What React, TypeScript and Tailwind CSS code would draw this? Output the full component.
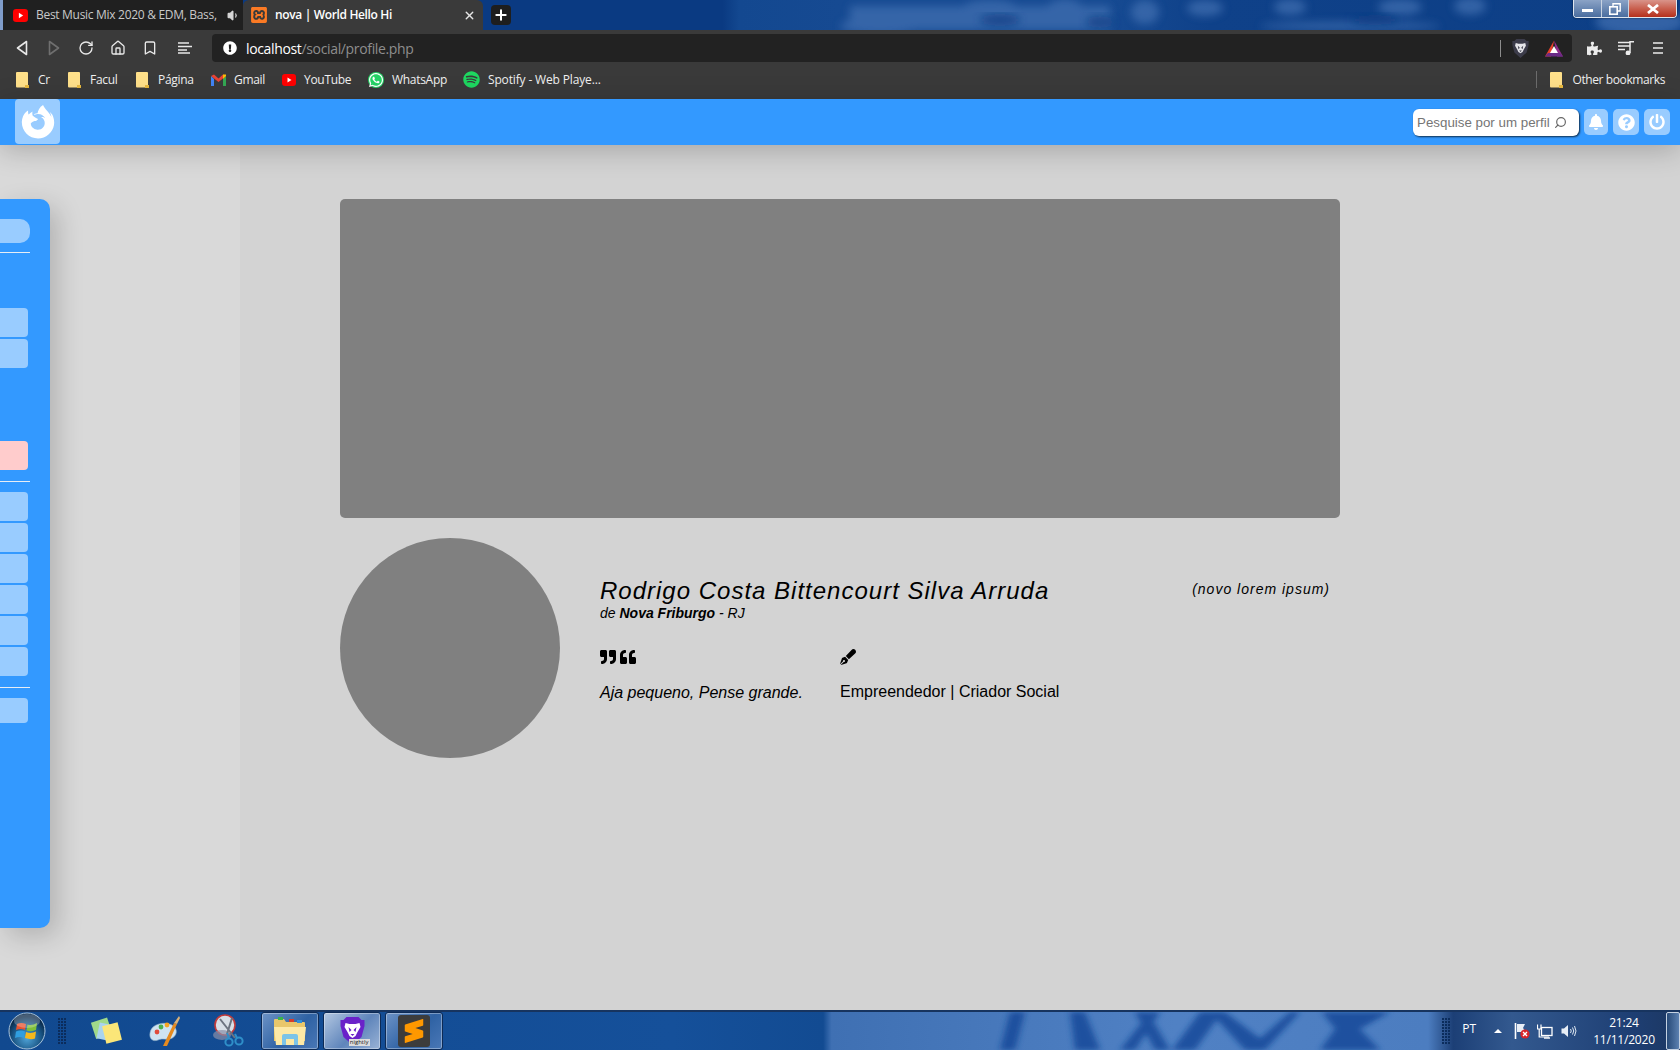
import React from "react";
import { FaBell, FaQuestionCircle, FaPowerOff, FaQuoteRight, FaQuoteLeft, FaPenFancy, FaWhatsapp, FaSpotify, FaPuzzlePiece, FaFirefoxBrowser, FaExclamationCircle } from "react-icons/fa";
import { SiSublimetext, SiXampp } from "react-icons/si";
import { Home, RotateCw, Bookmark, X, Plus, Volume1, Search } from "lucide-react";

const ui = "font-['Open_Sans',sans-serif]";
const web = "font-['Liberation_Sans',Arial,sans-serif]";

function Folder() {
  return (
    <svg width="13" height="16" viewBox="0 0 13 16" className="shrink-0">
      <path d="M0 1 a1 1 0 0 1 1-1 H11 a1 1 0 0 1 1 1 V13 L10 15.5 H1 a1 1 0 0 1-1-1 Z" fill="#ffe08a" />
      <path d="M9 13 H13 V16 H9 Z" fill="#e8b93f" />
    </svg>
  );
}

function Gmail() {
  return (
    <svg width="15" height="12" viewBox="0 0 15 12" className="shrink-0">
      <path d="M0 2 V12 H3 V5 Z" fill="#4285f4" />
      <path d="M12 5 V12 H15 V2 Z" fill="#34a853" />
      <path d="M0 2 L3 0.5 L7.5 4.5 L12 0.5 L15 2 L7.5 8 Z" fill="#ea4335" />
      <path d="M12 0.5 L15 0.5 V2 L12 5 Z" fill="#fbbc04" />
    </svg>
  );
}

function YT({ size = 14 }: { size?: number }) {
  return (
    <svg width={size} height={size} viewBox="0 0 14 14" className="shrink-0">
      <rect x="0" y="1" width="14" height="12" rx="3" fill="#f00" />
      <path d="M5.5 4.5 L9.5 7 L5.5 9.5 Z" fill="#fff" />
    </svg>
  );
}

function BraveShield({ w, h, fill, face }: { w: number; h: number; fill: string; face: string }) {
  return (
    <svg width={w} height={h} viewBox="0 0 24 28" className="shrink-0">
      <path d="M6 0 H18 L21 3 L24 3 L24 9 L21 20 L12 28 L3 20 L0 9 L0 3 L3 3 Z" fill={fill} />
      <path d="M5 6 L9 7 H15 L19 6 L20 10 L17 15 L15 19 L12 21 L9 19 L7 15 L4 10 Z" fill={face} />
      <path d="M8 10 L11 13 L9 15 Z M16 10 L13 13 L15 15 Z" fill={fill} />
      <path d="M10 17 H14 L12 19 Z" fill={fill} />
    </svg>
  );
}

function Mark({ icon, label, className = "", track = "tracking-[-0.3px]" }: { icon: React.ReactNode; label: string; className?: string; track?: string }) {
  return (
    <div className={`flex items-center shrink-0 ${className}`}>
      {icon}
      <span className={`text-[12px] ${track} text-[#f0f0f0] whitespace-nowrap`}>{label}</span>
    </div>
  );
}

function TitleWallpaper() {
  return (
    <svg className="absolute inset-0 w-full h-full" viewBox="0 0 1680 30" preserveAspectRatio="none">
      <defs>
        <filter id="tb"><feGaussianBlur stdDeviation="4" /></filter>
        <linearGradient id="tg" x1="0" x2="1">
          <stop offset="0" stopColor="#0a3a82" />
          <stop offset="0.43" stopColor="#0a3a82" />
          <stop offset="0.44" stopColor="#134890" />
          <stop offset="0.5" stopColor="#164a92" />
          <stop offset="0.66" stopColor="#164a92" />
          <stop offset="0.72" stopColor="#0f4189" />
          <stop offset="1" stopColor="#0d3f86" />
        </linearGradient>
      </defs>
      <rect width="1680" height="30" fill="url(#tg)" />
      <rect width="3" height="30" fill="#7f9cc9" />
      <g filter="url(#tb)" fill="#3f6eb0" opacity="0.75">
        <rect x="850" y="6" width="260" height="24" />
        <ellipse cx="880" cy="26" rx="40" ry="8" />
        <ellipse cx="990" cy="8" rx="28" ry="8" />
        <ellipse cx="1065" cy="8" rx="18" ry="9" />
        <ellipse cx="1145" cy="12" rx="14" ry="12" />
        <ellipse cx="1205" cy="8" rx="18" ry="8" />
        <ellipse cx="1290" cy="7" rx="16" ry="8" />
        <ellipse cx="1400" cy="7" rx="22" ry="8" />
        <ellipse cx="1470" cy="6" rx="16" ry="9" />
        <ellipse cx="1350" cy="26" rx="90" ry="4" />
        <ellipse cx="1640" cy="22" rx="45" ry="14" />
      </g>
      <g filter="url(#tb)" fill="#0a3a82" opacity="0.7">
        <ellipse cx="1000" cy="20" rx="20" ry="6" />
        <ellipse cx="1100" cy="22" rx="14" ry="6" />
        <ellipse cx="1375" cy="20" rx="24" ry="5" />
      </g>
    </svg>
  );
}

function TaskWallpaper() {
  return (
    <svg className="absolute inset-0 w-full h-full" viewBox="0 0 1680 40" preserveAspectRatio="none">
      <defs>
        <filter id="bb"><feGaussianBlur stdDeviation="3" /></filter>
        <linearGradient id="bg" x1="0" x2="1">
          <stop offset="0" stopColor="#11498f" />
          <stop offset="0.4" stopColor="#15509a" />
          <stop offset="0.49" stopColor="#124b92" />
          <stop offset="0.495" stopColor="#3f70b3" />
          <stop offset="0.7" stopColor="#5081c4" />
          <stop offset="0.85" stopColor="#4c7dc0" />
          <stop offset="0.865" stopColor="#1c3f76" />
          <stop offset="0.9" stopColor="#33598f" />
          <stop offset="0.97" stopColor="#1e3f74" />
          <stop offset="1" stopColor="#1c3762" />
        </linearGradient>
      </defs>
      <rect width="1680" height="40" fill="url(#bg)" />
      <g filter="url(#bb)" fill="#12489a" opacity="0.85">
        <path d="M1010 0 L1025 0 L1015 40 L1000 40 Z" />
        <path d="M1070 0 L1085 0 L1100 40 L1075 40 Z" />
        <path d="M1150 0 L1160 0 L1135 40 L1120 40 Z M1135 0 L1148 0 L1170 40 L1155 40 Z" />
        <path d="M1200 0 L1222 0 L1195 40 L1172 40 Z" />
        <path d="M1210 0 L1225 0 L1260 28 L1290 0 L1300 0 L1265 40 L1245 40 Z" />
        <path d="M1322 0 L1390 0 L1360 18 L1380 40 L1320 40 L1335 18 Z" />
      </g>
    </svg>
  );
}

function WinOrb() {
  return (
    <svg width="38" height="38" viewBox="0 0 38 38" className="shrink-0">
      <defs>
        <radialGradient id="orb" cx="50%" cy="70%" r="60%">
          <stop offset="0" stopColor="#4fa4d8" />
          <stop offset="0.7" stopColor="#17507f" />
          <stop offset="1" stopColor="#0b2a4a" />
        </radialGradient>
      </defs>
      <circle cx="19" cy="19" r="18" fill="url(#orb)" stroke="#a9c4dc" strokeWidth="1" />
      <path d="M9 12 Q13 10 18 12 L17 18 Q13 16 8 18 Z" fill="#e8532f" />
      <path d="M19.5 12.5 Q24 14 29 11 L28 18 Q24 20 18.5 18.5 Z" fill="#7fbf3a" />
      <path d="M8 19.5 Q13 17.5 17 19.5 L16 26 Q12 24 7 26 Z" fill="#2f9ee0" />
      <path d="M18 20 Q23 22 28 19.5 L27 26.5 Q23 28 17 26 Z" fill="#f4b81d" />
      <ellipse cx="19" cy="9" rx="13" ry="7" fill="#fff" opacity="0.25" />
    </svg>
  );
}

function Grip() {
  return (
    <div className="grid grid-cols-3 gap-[1px] shrink-0">
      {Array.from({ length: 27 }).map((_, i) => (
        <span key={i} className="w-[2px] h-[2px] bg-[#0b2c5c]" />
      ))}
    </div>
  );
}

function NotesIcon() {
  return (
    <svg width="32" height="28" viewBox="0 0 32 28">
      <rect x="3" y="3" width="17" height="17" fill="#9fd98a" transform="rotate(-18 11 11)" />
      <rect x="8" y="7" width="16" height="16" fill="#a9d4ee" transform="rotate(12 16 15)" />
      <rect x="14" y="7" width="16" height="18" fill="#fbe678" transform="rotate(-14 22 16)" />
    </svg>
  );
}

function PaintIcon() {
  return (
    <svg width="34" height="32" viewBox="0 0 34 32">
      <path d="M2 18 C3 9 16 6 24 10 C31 14 29 22 22 24 C16 25 15 23 10 25 C5 27 1 24 2 18 Z" fill="#cfe3f1" stroke="#8fb0c9" strokeWidth="0.6" />
      <circle cx="9" cy="17" r="2.4" fill="#e04c3c" />
      <circle cx="13" cy="12" r="2.4" fill="#4caf50" />
      <circle cx="19" cy="10" r="2.4" fill="#f5a623" />
      <path d="M15 31 L26 8 L29 9 L19 31 Z" fill="#e58a1f" />
      <path d="M26 8 L31 1 L32 3 L29 9 Z" fill="#d9b27a" />
    </svg>
  );
}

function SnipIcon() {
  return (
    <svg width="32" height="34" viewBox="0 0 32 34">
      <circle cx="13" cy="11" r="10" fill="#d8dfe6" stroke="#c23b3b" strokeWidth="1.6" />
      <ellipse cx="10" cy="21" rx="9" ry="5" fill="#8a8fa8" opacity="0.7" />
      <path d="M8 5 L23 24 M20 4 L15 20" stroke="#6d7480" strokeWidth="2" fill="none" />
      <circle cx="17" cy="28" r="3.6" fill="none" stroke="#2f8fc9" strokeWidth="2" />
      <circle cx="27" cy="27" r="3.6" fill="none" stroke="#2f8fc9" strokeWidth="2" />
      <path d="M17 24 L15 19 M25 24 L23 20" stroke="#2f8fc9" strokeWidth="2" />
    </svg>
  );
}

function ExplorerIcon() {
  return (
    <svg width="34" height="32" viewBox="0 0 34 32">
      <path d="M1 5 a1 1 0 0 1 1-1 H11 L13 7 H31 a1 1 0 0 1 1 1 V26 H1 Z" fill="#e9c76b" />
      <rect x="5" y="2" width="5" height="3" fill="#3bb54a" />
      <rect x="16" y="4" width="5" height="3" fill="#d73c2c" />
      <rect x="24" y="5" width="5" height="3" fill="#2f8fd9" />
      <path d="M1 12 H33 L31 30 H3 Z" fill="#fde9a6" />
      <path d="M9 30 V21 Q9 19 11 19 H23 Q25 19 25 21 V30 H21 V24 H13 V30 Z" fill="#7cc4e8" />
    </svg>
  );
}

function TaskButton({ children, active }: { children: React.ReactNode; active?: boolean }) {
  return (
    <div className={`w-[58px] h-[38px] rounded-[3px] border border-[#0d2a55] shadow-[inset_0_0_0_1px_rgba(255,255,255,0.35)] flex items-center justify-center ${active ? "bg-[linear-gradient(135deg,#b4c8e2,#5f85bb_55%,#9ab3d6)]" : "bg-[linear-gradient(135deg,#6d93c6,#2f62a4_55%,#4a78b6)]"}`}>
      {children}
    </div>
  );
}

function SideBtn({ pink, h = "h-[29px]" }: { pink?: boolean; h?: string }) {
  return <div className={`w-[28px] ${h} rounded-r-[4px] ${pink ? "bg-[#ffcccc]" : "bg-[#99ccff]"}`} />;
}

function SideLine() {
  return <div className="w-[30px] h-[1px] bg-[#e8eef5]" />;
}

export default function App() {
  return (
    <div className={`h-screen w-full flex flex-col overflow-hidden bg-[#d3d3d3] ${web}`}>
      {/* Title bar + tabs */}
      <div className={`relative h-[30px] shrink-0 flex items-end pl-[3px] ${ui}`}>
        <TitleWallpaper />
        <div className="relative h-[30px] w-[240px] bg-[#202020] flex items-center pl-[10px]">
          <YT size={15} />
          <span className="ml-[8px] w-[181px] overflow-hidden whitespace-nowrap text-[12px] tracking-[-0.3px] text-[#c9c9c9]">Best Music Mix 2020 &amp; EDM, Bass,</span>
          <Volume1 size={13} className="ml-[10px] text-[#d8d8d8]" fill="#d8d8d8" />
        </div>
        <div className="relative h-[30px] w-[240px] bg-[#3a3a3a] rounded-t-[6px] flex items-center pl-[8px]">
          <SiXampp size={16} className="text-[#fb7a24]" />
          <span className="ml-[8px] flex-1 whitespace-nowrap text-[12px] tracking-[-0.35px] font-semibold text-white">nova | World Hello Hi</span>
          <X size={13} strokeWidth={2.5} className="mr-[7px] text-[#e6e6e6]" />
        </div>
        <div className="relative ml-[8px] mb-[5px] w-[20px] h-[20px] rounded-[4px] bg-[#1e1e1e] flex items-center justify-center">
          <Plus size={16} strokeWidth={3} className="text-white" />
        </div>
        {/* window controls */}
        <div className="relative ml-auto mr-[3px] self-start h-[18px] w-[104px] flex rounded-b-[4px] border border-t-0 border-[#dfe6ef] overflow-hidden shadow-[0_0_2px_rgba(0,0,0,0.7)]">
          <div className="w-[28px] border-r border-[#c8d3e2] bg-[linear-gradient(#8ba3c6,#4a6d9f)] flex items-center justify-center">
            <span className="w-[11px] h-[3px] mt-[3px] bg-white" />
          </div>
          <div className="w-[27px] border-r border-[#c8d3e2] bg-[linear-gradient(#8ba3c6,#4a6d9f)] flex items-center justify-center">
            <svg width="12" height="12" viewBox="0 0 12 12">
              <path d="M4 3 V0.8 H11.2 V8 H9" fill="none" stroke="#fff" strokeWidth="1.4" />
              <rect x="0.8" y="3.8" width="7.4" height="7.4" fill="none" stroke="#fff" strokeWidth="1.6" />
            </svg>
          </div>
          <div className="flex-1 bg-[linear-gradient(#d9948a,#c9604f_50%,#b5301c)] flex items-center justify-center">
            <svg width="14" height="10" viewBox="0 0 14 10"><path d="M2 1 L12 9 M12 1 L2 9" stroke="#fff" strokeWidth="2.8" /></svg>
          </div>
        </div>
      </div>

      {/* Toolbar */}
      <div className={`h-[32px] shrink-0 bg-[#3a3a3a] flex items-end ${ui}`}>
        <div className="h-[28px] w-[212px] flex items-center text-[#e8e8e8]">
          <svg width="12" height="16" viewBox="0 0 12 16" className="ml-[16px]"><path d="M10.5 1.5 L1.5 8 L10.5 14.5 Z" fill="none" stroke="#e8e8e8" strokeWidth="1.6" strokeLinejoin="round" /></svg>
          <svg width="12" height="16" viewBox="0 0 12 16" className="ml-[20px]"><path d="M1.5 1.5 L10.5 8 L1.5 14.5 Z" fill="none" stroke="#6f6f6f" strokeWidth="1.6" strokeLinejoin="round" /></svg>
          <RotateCw size={16} strokeWidth={2} className="ml-[18px]" />
          <Home size={16} strokeWidth={2} className="ml-[16px]" />
          <Bookmark size={16} strokeWidth={2} className="ml-[16px]" />
          <svg width="14" height="12" viewBox="0 0 14 12" className="ml-[20px]"><path d="M0 1 H11 M0 4.5 H14 M0 8 H9 M0 11 H12" stroke="#e8e8e8" strokeWidth="1.4" /></svg>
        </div>
        <div className="h-[28px] w-[1360px] rounded-[4px] bg-[#222222] flex items-center pl-[11px]">
          <FaExclamationCircle size={14} className="text-white" />
          <span className="ml-[9px] text-[14px] tracking-[-0.35px] text-white">localhost<span className="text-[#8e8e8e]">/social/profile.php</span></span>
          <span className="ml-auto w-[1px] h-[17px] bg-[#8d8d8d]" />
          <div className="ml-[11px]"><BraveShield w={17} h={19} fill="#3c3c4a" face="#e6e6ea" /></div>
          <svg width="18" height="17" viewBox="0 0 18 17" className="ml-[16px] mr-[9px]">
            <path d="M9 0.5 L0 16.5 H6 Z" fill="#e8402a" />
            <path d="M9 0.5 L18 16.5 H12 Z" fill="#8e2c8a" />
            <path d="M0 16.5 L18 16.5 L15 13 H3 Z" fill="#6a2a86" />
            <path d="M9 6 L13 13 H5 Z" fill="#fff" />
          </svg>
        </div>
        <div className="h-[28px] flex-1 flex items-center text-[#ececec]">
          <FaPuzzlePiece size={15} className="ml-[15px]" />
          <svg width="16" height="14" viewBox="0 0 16 14" className="ml-[16px]"><path d="M0 1.5 H12 M0 5 H12 M0 8.5 H7" stroke="#ececec" strokeWidth="1.5" /><path d="M12 12 V0.8 H16" stroke="#ececec" strokeWidth="1.5" fill="none" /><circle cx="10" cy="12" r="2.4" fill="#ececec" /></svg>
          <svg width="10" height="12" viewBox="0 0 10 12" className="ml-[19px]"><path d="M0 1 H10 M0 6 H10 M0 11 H10" stroke="#ececec" strokeWidth="1.6" /></svg>
        </div>
      </div>

      {/* Bookmarks */}
      <div className={`h-[37px] shrink-0 bg-[#3a3a3a] flex items-center pl-[16px] pb-[2px] ${ui}`}>
        <Mark icon={<Folder />} label="Cr" className="gap-[9px] w-[52px]" />
        <Mark icon={<Folder />} label="Facul" className="gap-[9px] w-[68px]" />
        <Mark icon={<Folder />} label="Página" className="gap-[9px] w-[75px]" />
        <Mark icon={<Gmail />} label="Gmail" className="gap-[8px] w-[71px]" />
        <Mark icon={<YT />} label="YouTube" className="gap-[8px] w-[86px]" />
        <Mark
          icon={
            <div className="w-[16px] h-[16px] rounded-full bg-[#25d366]">
              <FaWhatsapp size={16} className="text-white" />
            </div>
          }
          label="WhatsApp"
          className="gap-[8px] w-[95px]"
        />
        <Mark icon={<FaSpotify size={17} className="text-[#1ed760]" />} label="Spotify - Web Playe..." className="gap-[8px]" track="tracking-[-0.15px]" />
        <div className="ml-auto w-[1px] h-[17px] bg-[#6c6c6c]" />
        <Mark icon={<Folder />} label="Other bookmarks" className="gap-[9px] ml-[13px] mr-[15px]" track="tracking-[-0.4px]" />
      </div>

      {/* Site nav */}
      <div className="relative z-10 h-[46px] shrink-0 bg-[#3399ff] flex items-center pl-[15px] pr-[10px] shadow-[0_5px_28px_rgba(0,0,0,0.22)]">
        <div className="w-[45px] h-[45px] self-start rounded-[4px] bg-[#99ccff] flex items-center justify-center">
          <FaFirefoxBrowser size={34} className="text-white" />
        </div>
        <div className="ml-auto w-[166px] h-[27px] rounded-[6px] bg-white shadow-[1px_1px_2px_rgba(0,0,0,0.7)] flex items-center pl-[4px]">
          <span className="text-[13.33px] leading-[16px] mt-[1px] text-[#757575] whitespace-nowrap">Pesquise por um perfil</span>
          <Search size={13} strokeWidth={2.2} className="ml-[4px] text-[#666666] -scale-x-100" />
        </div>
        <div className="ml-[5px] w-[24px] h-[26px] rounded-[5px] bg-[#99ccff] flex items-center justify-center">
          <FaBell size={16} className="text-white" />
        </div>
        <div className="ml-[5px] w-[26px] h-[26px] rounded-[5px] bg-[#99ccff] flex items-center justify-center">
          <FaQuestionCircle size={17} className="text-white" />
        </div>
        <div className="ml-[5px] w-[26px] h-[26px] rounded-[5px] bg-[#99ccff] flex items-center justify-center">
          <FaPowerOff size={16} className="text-white" />
        </div>
      </div>

      {/* Page */}
      <div className="flex-1 min-h-0 flex">
        <div className="w-[240px] shrink-0 bg-[#d9d9d9] pt-[54px]">
          <aside className="w-[50px] h-[729px] rounded-r-[10px] bg-[#3399ff] shadow-[8px_8px_26px_rgba(0,0,0,0.18)] pt-[20px] flex flex-col">
            <div className="w-[30px] h-[24px] rounded-r-[10px] bg-[#99ccff]" />
            <div className="mt-[9px]"><SideLine /></div>
            <div className="mt-[55px]"><SideBtn /></div>
            <div className="mt-[2px]"><SideBtn /></div>
            <div className="mt-[73px]"><SideBtn pink /></div>
            <div className="mt-[11px]"><SideLine /></div>
            <div className="mt-[10px] flex flex-col gap-[2px]">
              <SideBtn /><SideBtn /><SideBtn /><SideBtn /><SideBtn /><SideBtn />
            </div>
            <div className="mt-[11px]"><SideLine /></div>
            <div className="mt-[10px]"><SideBtn h="h-[25px]" /></div>
          </aside>
        </div>

        <main className="w-[1000px] ml-[100px] pt-[54px]">
          <div className="h-[319px] rounded-[5px] bg-[#808080]" />
          <div className="mt-[20px] flex">
            <div className="w-[220px] h-[220px] rounded-full bg-[#808080] shrink-0" />
            <div className="ml-[40px] flex-1 pr-[10px] text-black italic">
              <div className="mt-[39px] flex items-start justify-between">
                <div>
                  <h1 className="text-[24px] leading-[28px] tracking-[1px] font-normal">Rodrigo Costa Bittencourt Silva Arruda</h1>
                  <p className="text-[14px] leading-[16px]">de <b>Nova Friburgo</b> - RJ</p>
                </div>
                <span className="text-[14px] leading-[20px] tracking-[1px] mt-[2px]">(novo lorem ipsum)</span>
              </div>
              <div className="mt-[26px] flex">
                <div className="w-[240px]">
                  <div className="flex gap-[4px] h-[20px] items-center">
                    <FaQuoteRight size={16} />
                    <FaQuoteLeft size={16} />
                  </div>
                  <p className="mt-[16px] text-[16px] leading-[20px]">Aja pequeno, Pense grande.</p>
                </div>
                <div className="not-italic">
                  <div className="h-[20px] flex items-center">
                    <FaPenFancy size={16} />
                  </div>
                  <p className="mt-[15px] text-[16px] leading-[20px]">Empreendedor | Criador Social</p>
                </div>
              </div>
            </div>
          </div>
        </main>
      </div>

      {/* Taskbar */}
      <div className={`relative h-[40px] shrink-0 border-t-2 border-[#17345f] shadow-[inset_0_1px_0_#8fb0d8] flex items-center ${ui}`}>
        <TaskWallpaper />
        <div className="relative flex items-center h-full w-full">
          <div className="ml-[8px]"><WinOrb /></div>
          <div className="ml-[12px]"><Grip /></div>
          <div className="ml-[24px]"><NotesIcon /></div>
          <div className="ml-[26px]"><PaintIcon /></div>
          <div className="ml-[30px]"><SnipIcon /></div>
          <div className="ml-[17px] flex gap-[4px]">
            <TaskButton><ExplorerIcon /></TaskButton>
            <TaskButton active>
              <div className="relative">
                <BraveShield w={25} h={28} fill="#6a22c9" face="#ffffff" />
                <span className="absolute -right-[5px] -bottom-[1px] bg-[#dcdcdc] text-[#222] text-[6px] leading-[7px] px-[1px]">nightly</span>
              </div>
            </TaskButton>
            <TaskButton>
              <div className="w-[32px] h-[32px] rounded-[3px] bg-[#3c3c3c] flex items-center justify-center">
                <SiSublimetext size={24} className="text-[#ff9800]" />
              </div>
            </TaskButton>
          </div>
          <div className="ml-auto flex items-center h-full text-white">
            <Grip />
            <span className="ml-[12px] text-[12px] -mt-[4px]">PT</span>
            <span className="ml-[18px] w-0 h-0 border-x-[4px] border-x-transparent border-b-[4px] border-b-white" />
            <svg width="16" height="16" viewBox="0 0 16 16" className="ml-[12px]">
              <path d="M1.5 0 V16" stroke="#fff" strokeWidth="1.6" />
              <path d="M3 1 H11 L9 5 L12 9 H3 Z" fill="#e8eef6" />
              <circle cx="11" cy="11" r="4.6" fill="#d9252a" />
              <path d="M9 9 L13 13 M13 9 L9 13" stroke="#fff" strokeWidth="1.3" />
            </svg>
            <svg width="16" height="15" viewBox="0 0 16 15" className="ml-[7px]">
              <rect x="4.5" y="3.5" width="10.5" height="8" fill="none" stroke="#fff" strokeWidth="1.3" />
              <path d="M0.5 0.5 V5 H4 V0.5 M2.2 5 V13 H12" fill="none" stroke="#fff" strokeWidth="1.2" />
              <path d="M7 14 H13" stroke="#fff" strokeWidth="1.4" />
            </svg>
            <svg width="16" height="14" viewBox="0 0 16 14" className="ml-[8px]">
              <path d="M0.5 4.5 H3 L7 1 V13 L3 9.5 H0.5 Z" fill="#e8eef6" />
              <path d="M9.5 5 Q11 7 9.5 9 M11.5 3.5 Q14 7 11.5 10.5 M13.5 2 Q16.5 7 13.5 12" fill="none" stroke="#dfe8f2" strokeWidth="1" />
            </svg>
            <div className="ml-[16px] w-[62px] text-center text-[12px] leading-[17px] tracking-[-0.2px]">
              <div>21:24</div>
              <div>11/11/2020</div>
            </div>
            <div className="ml-[11px] w-[14px] h-full border border-[#c5d2e2] bg-[linear-gradient(90deg,#274a78,#5b80b0)] rounded-[2px]" />
          </div>
        </div>
      </div>
    </div>
  );
}
